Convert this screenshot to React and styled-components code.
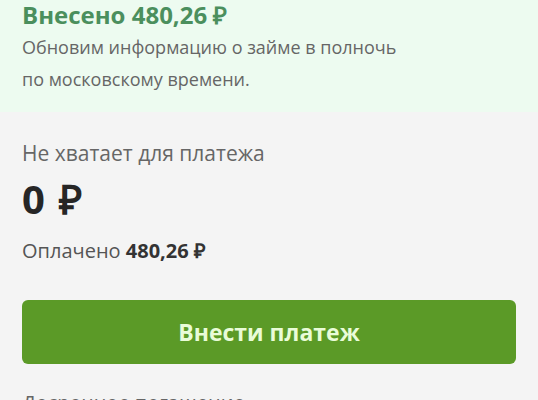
import React from "react";
import styled, { createGlobalStyle } from "styled-components";

const GlobalStyle = createGlobalStyle`
  body {
    margin: 0;
    background: #f4f4f4;
    font-family: "Open Sans", "Liberation Sans", sans-serif;
  }
`;

const Page = styled.div`
  width: 538px;
  height: 400px;
  overflow: hidden;
`;

const Notice = styled.section`
  background: #edfbf0;
  padding: 0 22px 17px;
`;

const NoticeTitle = styled.h2`
  margin: 0 0 1px;
  font-size: 24px;
  line-height: 30px;
  font-weight: 700;
  color: #4b8f5d;
`;

const NoticeText = styled.p`
  margin: 0;
  font-size: 18px;
  line-height: 32px;
  color: #666;
`;

const Summary = styled.section`
  background: #f4f4f4;
  padding: 29px 22px 0;
  display: flex;
  flex-direction: column;
`;

const Label = styled.div`
  font-size: 21px;
  line-height: 24px;
  color: #666;
`;

const Amount = styled.div`
  margin-top: 11px;
  font-size: 40px;
  line-height: 46px;
  font-weight: 700;
  letter-spacing: 2px;
  color: #262626;
`;

const Paid = styled.div`
  margin-top: 17px;
  font-size: 20px;
  line-height: 24px;
  color: #555;

  b {
    font-weight: 700;
    color: #333;
  }
`;

const PayButton = styled.button`
  margin-top: 37px;
  height: 64px;
  border: none;
  border-radius: 6px;
  background: #5b9a27;
  color: #e9fcd8;
  font-family: inherit;
  font-size: 23px;
  font-weight: 700;
  cursor: pointer;
`;

const Early = styled.div`
  margin-top: 27px;
  font-size: 20px;
  line-height: 24px;
  color: #666;
`;

export default function App() {
  return (
    <>
      <GlobalStyle />
      <Page>
        <Notice>
          <NoticeTitle>Внесено 480,26 ₽</NoticeTitle>
          <NoticeText>
            Обновим информацию о займе в полночь
            <br />
            по московскому времени.
          </NoticeText>
        </Notice>
        <Summary>
          <Label>Не хватает для платежа</Label>
          <Amount>0 ₽</Amount>
          <Paid>
            Оплачено <b>480,26 ₽</b>
          </Paid>
          <PayButton>Внести платеж</PayButton>
          <Early>Досрочное погашение</Early>
        </Summary>
      </Page>
    </>
  );
}
